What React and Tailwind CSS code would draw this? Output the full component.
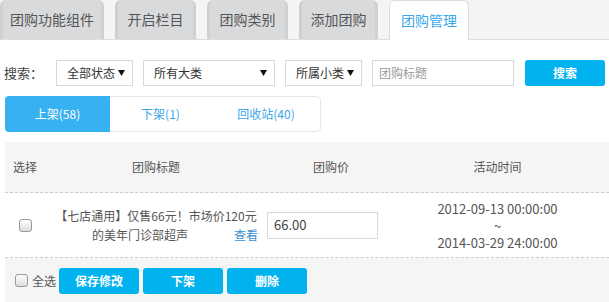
import { useState } from 'react';

const tabs = ['团购功能组件', '开启栏目', '团购类别', '添加团购', '团购管理'];
const tabWidths = ['w-[104px]', 'w-[81px]', 'w-[81px]', 'w-[79px]', 'w-[80px]'];

const Select = ({ label, width }) => (
    <div className={`${width} h-[26px] border border-[#d9d9d9] bg-white flex items-center justify-between pl-[10px] pr-[7px] text-[12px] text-[#333] whitespace-nowrap`}>
        <span>{label}</span>
        <svg width="7" height="6" viewBox="0 0 7 6">
            <path d="M0 0 H7 L3.5 6 Z" fill="#111" />
        </svg>
    </div>
);

const BlueButton = ({ children, width = 'w-[80px]' }) => (
    <button className={`${width} h-[26px] rounded-[3px] bg-[#00b3ef] text-white text-[12px] font-bold`}>
        {children}
    </button>
);

const Checkbox = () => (
    <span className="w-[13px] h-[13px] rounded-[3px] border border-[#999] bg-gradient-to-b from-white to-[#dedede]" />
);

const App = () => {
    const [active, setActive] = useState(0);
    const subTabs = ['上架(58)', '下架(1)', '回收站(40)'];

    return (
        <div className="w-[609px] h-[302px] bg-white overflow-hidden text-[#555]" style={{ fontFamily: '"Noto Sans CJK SC", "Noto Sans", sans-serif' }}>
            {/* top tabs */}
            <div className="h-[40px] bg-[#f4f4f4] border-b border-[#dddddd] flex items-end gap-[11px]">
                {tabs.map((t, i) => i === 4 ? (
                    <div key={t} className={`${tabWidths[i]} h-[40px] -mb-px bg-white border border-b-0 border-[#dddddd] rounded-t-[6px] flex items-center justify-center text-[14px] text-[#3aa8ea]`}>
                        {t}
                    </div>
                ) : (
                    <div key={t} className={`${tabWidths[i]} h-[39px] bg-[#d9dadc] border-x-[3px] border-[#cfd0d2] rounded-t-[6px] flex items-center justify-center text-[14px] text-[#555]`}>
                        {t}
                    </div>
                ))}
            </div>

            {/* search row */}
            <div className="flex items-center mt-[20px] h-[26px] pl-[4px]">
                <span className="text-[13px] text-[#444] w-[52px]">搜索：</span>
                <Select label="全部状态" width="w-[77px]" />
                <div className="w-[10px]" />
                <Select label="所有大类" width="w-[132px]" />
                <div className="w-[10px]" />
                <Select label="所属小类" width="w-[77px]" />
                <div className="w-[10px]" />
                <div className="w-[142px] h-[26px] border border-[#d9d9d9] flex items-center pl-[6px] text-[12px] text-[#999]">团购标题</div>
                <div className="w-[11px]" />
                <BlueButton>搜索</BlueButton>
            </div>

            {/* status tabs */}
            <div className="mt-[10px] ml-[5px] w-[316px] h-[36px] border border-[#e6e6e6] rounded-[4px] flex text-[12px]">
                {subTabs.map((s, i) => (
                    <button
                        key={s}
                        onClick={() => setActive(i)}
                        className={`${i === 2 ? 'flex-1' : 'w-[105px]'} ${active === i ? 'bg-[#38b1f2] text-white rounded-l-[4px]' : 'text-[#3aa5e8]'} -m-px h-[36px]`}
                    >
                        {s}
                    </button>
                ))}
            </div>

            {/* table */}
            <div className="mt-[10px] ml-[5px] text-[12px] text-[#555]">
                <div className="h-[51px] bg-[#f5f5f5] border-b border-dashed border-[#cccccc] flex items-center">
                    <div className="w-[40px] text-center">选择</div>
                    <div className="w-[222px] text-center">团购标题</div>
                    <div className="w-[128px] text-center">团购价</div>
                    <div className="w-[205px] text-center">活动时间</div>
                </div>
                <div className="h-[65px] border-b border-dashed border-[#cccccc] flex items-center">
                    <div className="w-[40px] flex justify-center">
                        <Checkbox />
                    </div>
                    <div className="w-[222px] leading-[19px] text-center">
                        <div className="whitespace-nowrap">【七店通用】仅售66元！市场价120元</div>
                        <div className="relative pr-[32px]">
                            的美年门诊部超声
                            <span className="absolute right-[9px] top-0 text-[#3a8fd0]">查看</span>
                        </div>
                    </div>
                    <div className="w-[128px]">
                        <div className="w-[111px] h-[27px] border border-[#d9d9d9] flex items-center pl-[6px] text-[13px] text-[#444]">66.00</div>
                    </div>
                    <div className="w-[205px] text-center text-[13px] leading-[17px]">
                        <div>2012-09-13 00:00:00</div>
                        <div>~</div>
                        <div>2014-03-29 24:00:00</div>
                    </div>
                </div>
                <div className="h-[45px] bg-[#f5f5f5] flex items-center pl-[10px]">
                    <Checkbox />
                    <span className="ml-[4px] mr-[3px]">全选</span>
                    <div className="flex gap-[4px]">
                        <BlueButton>保存修改</BlueButton>
                        <BlueButton>下架</BlueButton>
                        <BlueButton>删除</BlueButton>
                    </div>
                </div>
            </div>
        </div>
    );
};

export default App;
